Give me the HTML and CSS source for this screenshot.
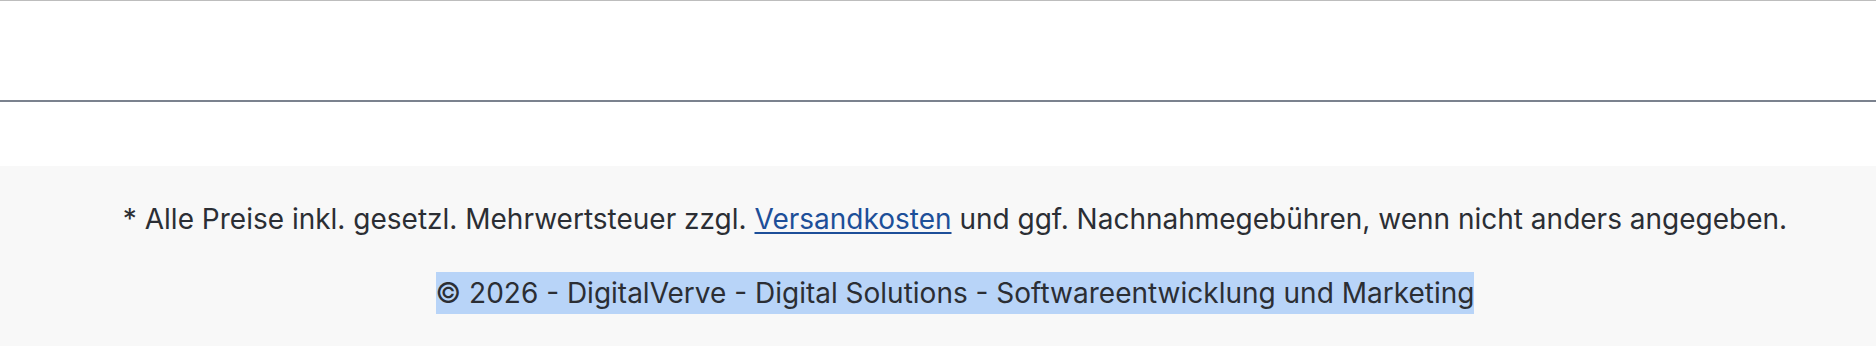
FILE: index.html
```html
<!DOCTYPE html>
<html lang="de">
<head>
<meta charset="utf-8">
<title>Footer</title>
<link rel="stylesheet" href="styles.css">
</head>
<body>
<div class="page">
  <div class="content"></div>
  <hr class="divider">
  <div class="spacer"></div>
  <footer class="footer">
    <p class="note">* Alle Preise inkl. gesetzl. Mehrwertsteuer zzgl. <a class="link" href="#">Versandkosten</a> und ggf. Nachnahmegebühren, wenn nicht anders angegeben.</p>
    <p class="copy"><span class="selected">© 2026 - DigitalVerve - Digital Solutions - Softwareentwicklung und Marketing</span></p>
  </footer>
</div>
</body>
</html>
```
FILE: styles.css
```css
html, body {
  margin: 0;
  padding: 0;
  background: #ffffff;
}
body {
  font-family: Inter, "Noto Sans", "Liberation Sans", sans-serif;
  color: #2b2e34;
}
.page {
  display: flex;
  flex-direction: column;
  width: 100%;
}
.content {
  border-top: 1px solid #bdbdbd;
  height: 99px;
}
.divider {
  margin: 0;
  border: 0;
  height: 2px;
  background: #7b828e;
}
.spacer {
  height: 64px;
}
.footer {
  background: #f8f8f8;
  padding: 32px 0 32px 34px;
  display: flex;
  flex-direction: column;
  align-items: center;
  gap: 32px;
  font-size: 28px;
  line-height: 42px;
}
.note, .copy {
  margin: 0;
  text-align: center;
}
.link {
  color: #1d4f99;
  text-decoration: underline;
  text-underline-offset: 3px;
}
.selected {
  display: inline-block;
  background: #b8d4f8;
}
```
